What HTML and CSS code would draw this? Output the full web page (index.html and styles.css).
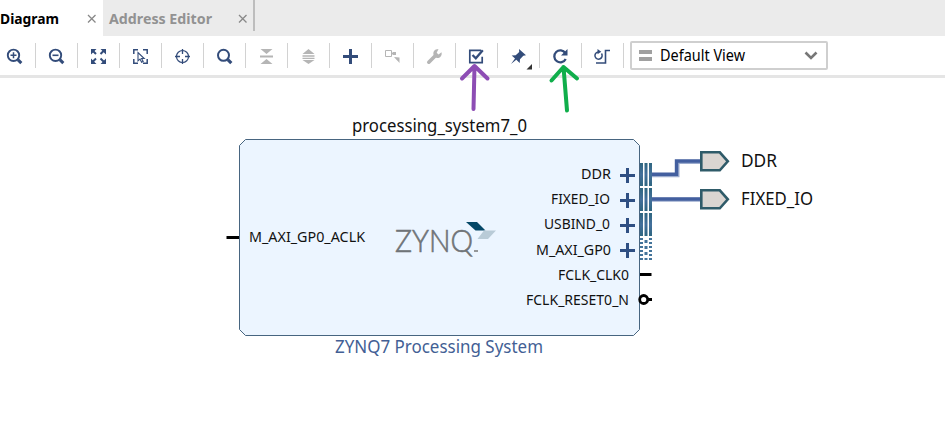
FILE: index.html
```html
<!DOCTYPE html>
<html lang="en">
<head>
<meta charset="utf-8">
<title>Diagram</title>
<link rel="stylesheet" href="styles.css">
</head>
<body>
<nav class="tabs">
  <div class="tab tab-active"><svg class="label" width="61" height="36"><text x="0" y="24" textLength="59" lengthAdjust="spacingAndGlyphs">Diagram</text></svg><svg class="close" width="10" height="10"><path d="M1 1L8.500 8.500M8.500 1L1 8.500"/></svg></div>
  <div class="tab tab-idle"><svg class="label" width="105" height="36"><text x="0" y="24" textLength="103" lengthAdjust="spacingAndGlyphs">Address Editor</text></svg><svg class="close" width="10" height="10"><path d="M1 1L8.500 8.500M8.500 1L1 8.500"/></svg></div>
  <i class="tab-end"></i>
</nav>
<div class="toolbar">
  <button class="tool"><svg viewBox="0 0 24 24"><circle cx="11.500" cy="11.300" r="5.700" stroke-width="1.900"/><path d="M8.500 11.300h6M11.500 8.300v6" stroke-width="1.500"/><path d="M15.800 15.600l3.500 3.500" stroke-width="3"/></svg></button>
  <button class="tool"><svg viewBox="0 0 24 24"><circle cx="11.500" cy="11.300" r="5.700" stroke-width="1.900"/><path d="M8.500 11.300h6" stroke-width="1.600"/><path d="M15.800 15.600l3.500 3.500" stroke-width="3"/></svg></button>
  <button class="tool"><svg viewBox="0 0 24 24"><path d="M6 6l4 4M18.500 6l-4 4M6 18.500l4-4M18.500 18.500l-4-4" stroke-width="2"/><path class="solid" d="M5 5h5.500L5 10.500zM20 5h-5.500L20 10.500zM5 20h5.500L5 14.500zM20 20h-5.500L20 14.500z"/></svg></button>
  <button class="tool"><svg viewBox="0 0 24 24"><path d="M5.800 10V5.800H10M15 5.800h4.200V10M5.800 15v4.200H10M19.200 15v4.200H15" stroke-width="1.500"/><path d="M10 8.500v8.300l2-1.700 1.600 3.200 1.600-.8-1.600-3h2.600z" stroke-width="1.100"/></svg></button>
  <button class="tool"><svg viewBox="0 0 24 24"><circle cx="12.500" cy="12.500" r="6" stroke-width="1.200"/><path d="M12.500 5v5M12.500 15v5M5 12.500h5M15 12.500h5" stroke-width="1.300"/></svg></button>
  <button class="tool"><svg viewBox="0 0 24 24"><circle cx="11.500" cy="11.300" r="5.500" stroke-width="2"/><path d="M15.800 15.600l3.500 3.500" stroke-width="3.200"/></svg></button>
  <button class="tool off"><svg viewBox="0 0 24 24"><path class="solid" d="M6.500 5h12l-6 5zM6 11.500h13v2H6zM6.500 20h12l-6-5z"/></svg></button>
  <button class="tool off"><svg viewBox="0 0 24 24"><path class="solid" d="M6.500 10l6-5 6 5zM6.500 11.200h12v1.500h-12zM6.500 13.700h12v1.300h-12zM6.500 16h12l-6 4z"/></svg></button>
  <button class="tool"><svg viewBox="0 0 24 24"><path d="M5 12.500h15M12.500 5v15" stroke-width="3"/></svg></button>
  <button class="tool off"><svg viewBox="0 0 24 24"><path d="M5.500 6.500h6v6h-6zM12 9.500h2" stroke-width="1"/><path class="solid" d="M12.500 8h3.500v3h-3.500zM14 13l5.500.5v5.500l-1.500-1.700-1.300-1.300z"/></svg></button>
  <button class="tool off"><svg viewBox="0 0 24 24"><path d="M6.800 18.200l7-7" stroke-width="3.600" stroke-linecap="round"/><path class="solid" d="M16.500 5c-4 0-6 3-4.800 6.200 1 3.200 5 3.600 7 1.200 1-1.200 1.200-2.700.8-4.200l-3 2.300-1.800-1.700z"/></svg></button>
  <button class="tool"><svg viewBox="0 0 24 24"><path d="M17 6.300H5.800v12.400h12.400v-6" stroke-width="1.700"/><path d="M8.500 11l3.300 3.300 7-8" stroke-width="2.300"/></svg></button>
  <button class="tool"><svg viewBox="0 0 24 24"><path class="solid" d="M13 5l7 6.300-2.700.4-3.300 3.500-.3 3.800-3.400-3.300L5 20l4-5.500-3.300-3 4-.2 3.500-3.300z"/><path fill="#333" stroke="none" d="M26 20v5.500H20.500z"/></svg></button>
  <button class="tool"><svg viewBox="0 0 24 24"><path d="M17.300 9A6 6 0 1 0 17.700 15" stroke-width="2.300"/><path class="solid" d="M19.500 5v6.500h-6.500z"/></svg></button>
  <button class="tool"><svg viewBox="0 0 24 24"><path d="M11.500 9.500A3.600 3.600 0 1 1 8 8" stroke-width="1.500"/><path class="solid" d="M7.500 5l3.800 2.700-3.800 2.500z"/><path d="M6 19h9.500V6.500H20" stroke-width="1.600"/></svg></button>
  <div class="select">
    <svg class="bars" width="14" height="12"><path fill="#a0a0a0" d="M0 0h13v4H0zM0 7h13v4H0z"/></svg>
    <svg class="select-label" width="88" height="27"><text x="0" y="19" textLength="85" lengthAdjust="spacingAndGlyphs">Default View</text></svg>
    <svg class="chevron" width="14" height="10"><path d="M1.500 1.500L7 7l5.500-5.500"/></svg>
  </div>
</div>
<main class="canvas">
  <svg width="945" height="355" viewBox="0 78 945 355">
    <defs>
      <linearGradient id="port" x1="0" y1="0" x2="0" y2="1"><stop offset="0" stop-color="#2e6680"/><stop offset=".5" stop-color="#44709c"/><stop offset="1" stop-color="#2e6680"/></linearGradient>
      <g id="bus"><path fill="url(#port)" d="M0 0h3v23h-3zM4.500 0h3v23h-3zM9 0h3v23h-3z"/></g>
      <path id="plus" d="M-7.500 0h15M0-7.500v15" stroke="#2f4f83" stroke-width="3"/>
    </defs>
    <path d="M245.500 139.500h388l6 6v184l-6 6h-388l-6-6v-184z" fill="#ecf5ff" stroke="#476580"/>
    <g class="name">
      <text x="352" y="132" textLength="175" lengthAdjust="spacingAndGlyphs">processing_system7_0</text>
      <text class="type" x="335" y="353" textLength="208" lengthAdjust="spacingAndGlyphs">ZYNQ7 Processing System</text>
      <text x="741" y="167" textLength="36" lengthAdjust="spacingAndGlyphs">DDR</text>
      <text x="741" y="205" textLength="72" lengthAdjust="spacingAndGlyphs">FIXED_IO</text>
    </g>
    <g class="pin">
      <text x="249" y="242" textLength="116" lengthAdjust="spacingAndGlyphs">M_AXI_GP0_ACLK</text>
      <text x="581" y="179" textLength="30" lengthAdjust="spacingAndGlyphs">DDR</text>
      <text x="551" y="204" textLength="59" lengthAdjust="spacingAndGlyphs">FIXED_IO</text>
      <text x="544" y="229" textLength="66" lengthAdjust="spacingAndGlyphs">USBIND_0</text>
      <text x="536" y="255" textLength="75" lengthAdjust="spacingAndGlyphs">M_AXI_GP0</text>
      <text x="558" y="280" textLength="71" lengthAdjust="spacingAndGlyphs">FCLK_CLK0</text>
      <text x="526" y="305" textLength="103" lengthAdjust="spacingAndGlyphs">FCLK_RESET0_N</text>
    </g>
    <text class="logo" x="395" y="252" textLength="78" lengthAdjust="spacingAndGlyphs">ZYNQ</text>
    <path d="M474 251h4" stroke="#777" stroke-width="1.500"/>
    <path fill="#044767" d="M466 222h11l8.500 8.500h-10z"/>
    <path fill="#b9cbd7" d="M484 230.500h12l-8 8.500h-10.500z"/>
    <use href="#plus" x="627.500" y="175.500"/><use href="#plus" x="627.500" y="200.500"/><use href="#plus" x="627.500" y="225.500"/><use href="#plus" x="627.500" y="250.500"/>
    <use href="#bus" x="640" y="163"/><use href="#bus" x="640" y="188"/><use href="#bus" x="640" y="213"/>
    <g stroke="#44749a" stroke-width="3"><path stroke-dasharray="2 2" d="M641.500 238v23M650.500 238v23"/><path stroke-dasharray="3 3" d="M646 240v20"/></g>
    <path d="M652 175.300h25.500V162H701M652 199.800h49" fill="none" stroke="#9cacce" stroke-width="4"/>
    <path d="M652 174.300h24.500V161H701M652 199h49" fill="none" stroke="#435f9f" stroke-width="3.400"/>
    <path d="M701.300 152.300h18.500l8 9-8 9h-18.500zM701.300 190.300h18.500l8 9-8 9h-18.500z" fill="#dad5d1" stroke="#2f5b69" stroke-width="2.600"/>
    <path d="M226.500 237.500H239M640 274.500h11.500M647 299.500h5" stroke="#000" stroke-width="3"/>
    <circle cx="643.700" cy="299.500" r="4" fill="#fff" stroke="#000" stroke-width="2.800"/>
  </svg>
</main>
<svg class="arrows" width="130" height="56" viewBox="455 60 130 56">
  <path stroke="#8d4db4" d="M473.500 109L474.500 66M462 78.500L474.500 66L487.500 78.500"/>
  <path stroke="#10ae4b" d="M567 110.500L563.500 67M551.500 80.500L563.500 67L577 78.500"/>
</svg>
</body>
</html>
```
FILE: styles.css
```css
* { box-sizing: border-box; }
body {
  margin: 0;
  width: 945px;
  height: 433px;
  overflow: hidden;
  position: relative;
  background: #fff;
  font-family: "Noto Sans", "Open Sans", sans-serif;
}
svg { display: block; flex: none; overflow: visible; }
.tabs { display: flex; height: 36px; background: #ebebeb; }
.tab { display: flex; height: 36px; }
.tab-active { width: 103px; background: #fff; }
.tab-idle { width: 150px; padding-left: 6px; }
.label { font-size: 15px; font-weight: 700; }
.tab-idle .label { fill: #929292; }
.close { margin: 14px 0 0 26px; stroke: #888; stroke-width: 1.3; fill: none; }
.tab-idle .close { margin-left: 24px; }
.tab-end { width: 2px; height: 31px; background: #bdbdbd; }
.toolbar {
  display: flex;
  height: 42px;
  padding-right: 8px;
  border-bottom: 3px solid #e5e5e5;
  margin-left: -6px;
}
.tool {
  flex: none;
  width: 42px;
  height: 25px;
  margin: 7px 0 0;
  padding: 0 0 0 8px;
  border: 0;
  border-right: 1px solid #d2d2d2;
  background: none;
}
.tool svg { width: 24px; height: 24px; fill: none; stroke: #334c7a; }
.tool .solid { fill: #334c7a; stroke: none; }
.tool.off svg { stroke: #b5b5b5; }
.tool.off .solid { fill: #b5b5b5; }
.select {
  display: flex;
  align-items: center;
  width: 198px;
  height: 29px;
  margin: 5px 0 0 6px;
  padding: 0 8px;
  border: 2px solid #cfcfcf;
  border-radius: 2px;
}
.bars { margin-left: -1px; }
.select-label { margin-left: 7px; font-size: 15.5px; }
.chevron { margin-left: auto; fill: none; stroke: #777; stroke-width: 2.6; }
.canvas { height: 355px; }
.name { font-size: 17.5px; fill: #111; }
.name .type { fill: #435f95; }
.pin { font-size: 14.5px; fill: #111; }
.logo { font-family: Lato, sans-serif; font-weight: 300; font-size: 31px; fill: #707478; stroke: #707478; stroke-width: .6px; }
.arrows {
  position: absolute;
  left: 455px;
  top: 60px;
  fill: none;
  stroke-width: 4;
  stroke-linecap: round;
  stroke-linejoin: round;
}
```
